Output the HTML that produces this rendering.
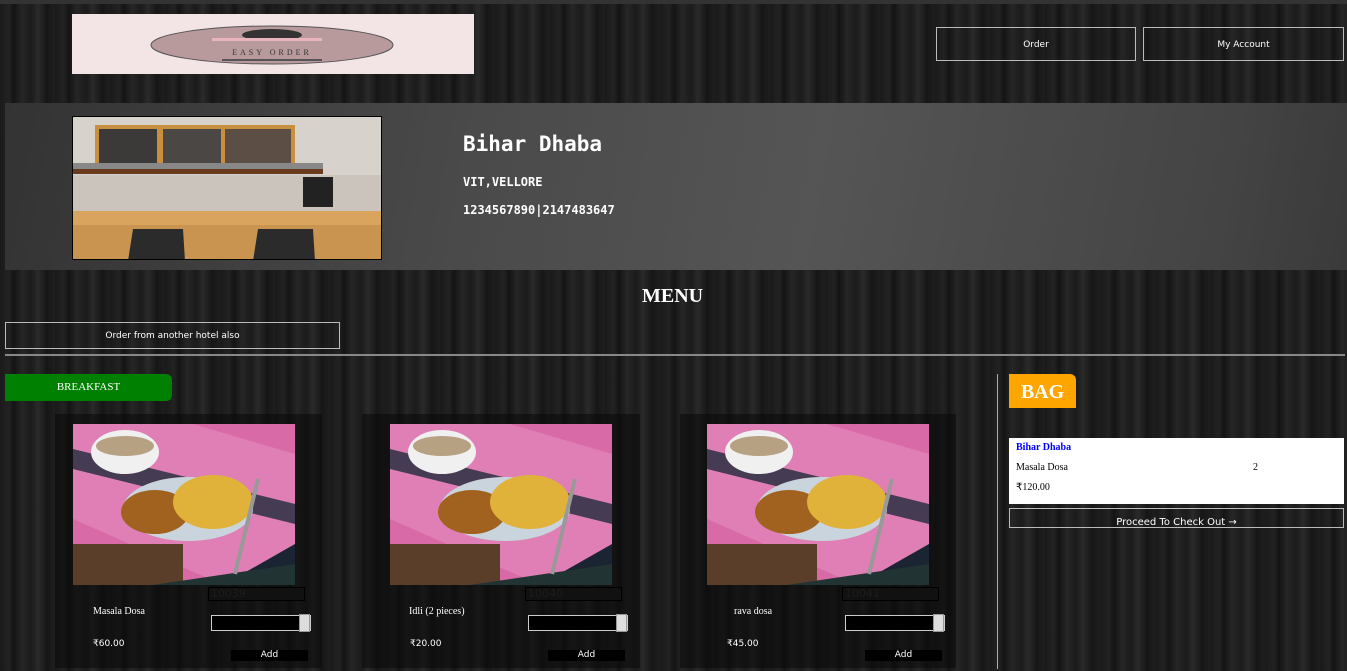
<!DOCTYPE html>
<html><head><meta charset="utf-8"><style>
*{box-sizing:border-box;margin:0;padding:0}
body{width:1347px;height:671px;overflow:hidden;position:relative;font-family:"DejaVu Sans","Liberation Sans",sans-serif;color:#fff;
background:#1c1c1c repeating-linear-gradient(90deg,#1a1a1a 0,#222 9px,#141414 14px,#262626 22px,#1b1b1b 31px,#2a2a2a 38px,#161616 47px,#1f1f1f 55px);}
.abs{position:absolute}
.top{left:0;top:0;width:1347px;height:4px;background:#333}
.btn{border:1px solid #bbb;font-size:9px;text-align:center;color:#fff}
.hero{left:5px;top:103px;width:1342px;height:167px;background:linear-gradient(100deg,#333 0%,#4a4a4a 35%,#555 60%,#444 90%,#3a3a3a 100%)}
.mono{font-family:"DejaVu Sans Mono","Liberation Mono",monospace;font-weight:bold}
.card{top:414px;height:254px;background:rgba(10,10,10,.55)}
.serif{font-family:"Liberation Serif",serif}
.idb{width:97px;height:14px;background:#111;border:1px solid #000;color:#1c1c1c;font-size:11px;padding-left:2px;line-height:12px}
.num{width:100px;height:16px;background:#000;border:1px solid #ccc}
.spin{position:absolute;right:0;top:-2px;width:11px;height:18px;background:#ddd;border:1px solid #999}
.add{width:77px;height:11px;background:#000;font-size:9px;text-align:center;line-height:11px}
</style></head><body>
<div class="abs top"></div>
<div class="abs" style="left:72px;top:14px;width:402px;height:60px;background:#f3e5e6">
<svg width="402" height="60"><ellipse cx="200" cy="31" rx="121" ry="19" fill="#b89a9c" stroke="#555" stroke-width="1"/><ellipse cx="200" cy="21" rx="30" ry="6" fill="#333"/><rect x="140" y="24" width="110" height="3" fill="#e9b4bd"/><text x="200" y="41" font-size="8" text-anchor="middle" fill="#333" font-family="Liberation Serif" letter-spacing="3">EASY ORDER</text><rect x="150" y="45" width="100" height="2" fill="#555"/></svg></div>
<div class="abs btn" style="left:936px;top:27px;width:200px;height:34px;line-height:34px">Order</div>
<div class="abs btn" style="left:1143px;top:27px;width:201px;height:34px;line-height:34px">My Account</div>

<div class="abs hero"></div>
<div class="abs" style="left:72px;top:116px;width:310px;height:144px;border:1px solid #000;overflow:hidden;background:#cfc8c0">
<svg width="310" height="144"><rect width="310" height="60" fill="#d8d2cc"/><rect x="22" y="8" width="200" height="46" fill="#c8903e"/><rect x="26" y="12" width="58" height="38" fill="#3c3a38"/><rect x="90" y="12" width="58" height="38" fill="#4a4744"/><rect x="152" y="12" width="66" height="38" fill="#5c4e44"/><rect x="0" y="46" width="250" height="6" fill="#888"/><rect x="0" y="52" width="250" height="5" fill="#6b3b20"/><rect x="0" y="58" width="310" height="50" fill="#cac4bc"/><rect x="230" y="60" width="30" height="30" fill="#222"/><rect x="0" y="94" width="310" height="50" fill="#d9a45e"/><rect x="0" y="108" width="310" height="36" fill="#c99350"/><path d="M55 144 L60 112 L110 112 L112 144Z M180 144 L185 112 L240 112 L242 144Z" fill="#2b2b2b"/></svg></div>
<div class="abs mono" style="left:463px;top:132px;font-size:21px">Bihar Dhaba</div>
<div class="abs mono" style="left:463px;top:175px;font-size:12px">VIT,VELLORE</div>
<div class="abs mono" style="left:463px;top:203px;font-size:12px">1234567890|2147483647</div>

<div class="abs serif" style="left:642px;top:285px;font-size:20px;font-weight:bold">MENU</div>
<div class="abs btn" style="left:5px;top:322px;width:335px;height:27px;line-height:27px">Order from another hotel also</div>
<div class="abs" style="left:5px;top:354px;width:1340px;height:2px;background:#888"></div>

<div class="abs serif" style="left:5px;top:374px;width:167px;height:27px;background:#008000;border-radius:0 6px 6px 0;font-size:11px;text-align:center;line-height:27px">BREAKFAST</div>

<div class="abs" style="left:997px;top:374px;width:1px;height:295px;background:#aaa"></div>
<div class="abs serif" style="left:1009px;top:374px;width:67px;height:34px;background:#ffa500;border-radius:0 6px 0 0;font-size:20px;font-weight:bold;text-align:center;line-height:36px">BAG</div>
<div class="abs serif" style="left:1009px;top:438px;width:335px;height:66px;background:#fff;color:#000;font-size:10px">
<div class="abs" style="left:7px;top:4px;color:#00f;font-weight:bold">Bihar Dhaba</div>
<div class="abs" style="left:7px;top:24px">Masala Dosa</div>
<div class="abs" style="left:244px;top:24px">2</div>
<div class="abs" style="left:7px;top:44px">₹120.00</div></div>
<div class="abs btn" style="left:1009px;top:508px;width:335px;height:20px;font-size:10px;line-height:27px;overflow:hidden">Proceed To Check Out →</div>

<div class="abs card" style="left:55px;width:267px"></div>
<div class="abs card" style="left:362px;width:278px"></div>
<div class="abs card" style="left:680px;width:276px"></div>

<svg width="0" height="0" style="position:absolute"><defs><g id="food"><rect width="222" height="161" fill="#d86aa8"/><path d="M0 0 L120 0 L222 30 L222 161 L150 161 L0 95Z" fill="#e07fb5"/><path d="M0 25 L222 80 L222 100 L0 45Z" fill="#1e2a3a" opacity=".8"/><path d="M150 161 L222 120 L222 161Z" fill="#1a2433"/><rect x="0" y="120" width="110" height="41" fill="#5a3e2a"/><path d="M80 161 L222 140 L222 161Z" fill="#233"/><ellipse cx="52" cy="28" rx="34" ry="22" fill="#f0f0f0"/><ellipse cx="52" cy="22" rx="29" ry="10" fill="#b6a183"/><ellipse cx="115" cy="85" rx="65" ry="32" fill="#c9d4dc"/><ellipse cx="82" cy="88" rx="34" ry="22" fill="#a0621e"/><ellipse cx="140" cy="78" rx="40" ry="27" fill="#e0b23a"/><path d="M185 55 L162 150" stroke="#999" stroke-width="4"/></g></defs></svg>
<svg class="abs" style="left:73px;top:424px" width="222" height="161"><use href="#food"/></svg>
<svg class="abs" style="left:390px;top:424px" width="222" height="161"><use href="#food"/></svg>
<svg class="abs" style="left:707px;top:424px" width="222" height="161"><use href="#food"/></svg>

<div class="abs idb" style="left:208px;top:587px">10039</div>
<div class="abs idb" style="left:525px;top:587px">10040</div>
<div class="abs idb" style="left:842px;top:587px">10041</div>

<div class="abs serif" style="left:93px;top:606px;font-size:10px">Masala Dosa</div>
<div class="abs serif" style="left:409px;top:606px;font-size:10px">Idli (2 pieces)</div>
<div class="abs serif" style="left:734px;top:606px;font-size:10px">rava dosa</div>

<div class="abs num" style="left:211px;top:615px"><div class="spin"></div></div>
<div class="abs num" style="left:528px;top:615px"><div class="spin"></div></div>
<div class="abs num" style="left:845px;top:615px"><div class="spin"></div></div>

<div class="abs" style="left:93px;top:639px;font-size:9px">₹60.00</div>
<div class="abs" style="left:410px;top:639px;font-size:9px">₹20.00</div>
<div class="abs" style="left:727px;top:639px;font-size:9px">₹45.00</div>

<div class="abs add" style="left:231px;top:650px">Add</div>
<div class="abs add" style="left:548px;top:650px">Add</div>
<div class="abs add" style="left:865px;top:650px">Add</div>
</body></html>
